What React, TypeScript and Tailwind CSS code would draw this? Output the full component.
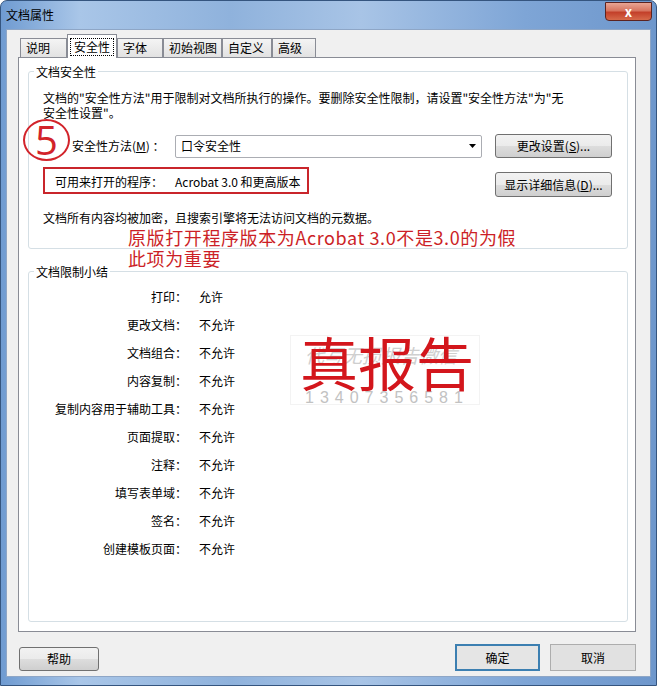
const tabs = [
  { label: "说明", w: "w-[47px]" },
  { label: "安全性", w: "w-[50px]", active: true },
  { label: "字体", w: "w-[46px]" },
  { label: "初始视图", w: "w-[59px]" },
  { label: "自定义", w: "w-[50px]" },
  { label: "高级", w: "w-[44px]" },
];

const limits = [
  { label: "打印", value: "允许" },
  { label: "更改文档", value: "不允许" },
  { label: "文档组合", value: "不允许" },
  { label: "内容复制", value: "不允许" },
  { label: "复制内容用于辅助工具", value: "不允许" },
  { label: "页面提取", value: "不允许" },
  { label: "注释", value: "不允许" },
  { label: "填写表单域", value: "不允许" },
  { label: "签名", value: "不允许" },
  { label: "创建模板页面", value: "不允许" },
];

const btn =
  "flex items-center justify-center rounded-[3px] border border-[#707070] bg-[linear-gradient(180deg,#f2f2f2_0%,#ebebeb_50%,#dddddd_51%,#cfcfcf_100%)] text-[12px] text-black";

const App = () => {
  return (
    <div className="flex h-[686px] w-[657px] flex-col rounded-t-[7px] border border-[#35557f] bg-[linear-gradient(90deg,#6f9bd1_0%,#a9c6e8_12%,#8fb2dc_35%,#a8c4e6_55%,#7ea5d6_80%,#6e97cc_100%)] font-['Noto_Sans_CJK_SC','Liberation_Sans',sans-serif] text-black">
      {/* 标题栏 */}
      <div className="flex h-[28px] items-start justify-between pl-[5px] pr-[4px]">
        <span className="mt-[6px] text-[12px] leading-[16px]">文档属性</span>
        <div className="mt-[1px] flex h-[19px] w-[47px] items-center justify-center rounded-b-[4px] border border-[#5c2320] bg-[linear-gradient(180deg,#e9a594_0%,#d77560_45%,#c3402a_55%,#d66a4a_100%)] text-[13px] font-bold leading-none text-white">
          x
        </div>
      </div>

      {/* 客户区 */}
      <div className="mx-[5px] mb-[8px] flex flex-1 flex-col border border-[#8ea6c6] bg-[#f0f0f0] pl-[11px] pt-[4px]">
        {/* 选项卡 */}
        <div className="relative z-10 ml-[2px] flex h-[23px] items-end">
          {tabs.map((t) =>
            t.active ? (
              <div
                key={t.label}
                className={`${t.w} -mb-px flex h-[24px] items-center justify-center border border-b-0 border-[#898c95] bg-white text-[12px]`}
              >
                <span className="border border-dotted border-black px-[3px] leading-[16px]">{t.label}</span>
              </div>
            ) : (
              <div
                key={t.label}
                className={`${t.w} flex h-[19px] items-center border border-b-0 border-[#898c95] bg-[linear-gradient(180deg,#f4f4f4,#e2e2e2)] pl-[5px] text-[12px] leading-[16px]`}
              >
                {t.label}
              </div>
            )
          )}
        </div>

        {/* 面板 */}
        <div className="flex h-[575px] w-[618px] flex-col border border-[#898c95] bg-white pl-[9px] pt-[13px] text-[12px]">
          {/* 文档安全性 */}
          <div className="relative h-[178px] w-[600px] rounded-[3px] border border-[#d5dfe5]">
            <span className="absolute -top-[8px] left-[5px] bg-white px-[2px] leading-[16px]">文档安全性</span>
            <div className="flex flex-col pl-[14px] pr-[15px] pt-[18px]">
              <p className="leading-[15px]">
                文档的"安全性方法"用于限制对文档所执行的操作。要删除安全性限制，请设置"安全性方法"为"无
                <br />
                安全性设置"。
              </p>

              <div className="mt-[14px] flex h-[24px] items-center">
                <span className="w-[122px] pl-[29px] text-left">安全性方法(<span className="underline">M</span>) ：</span>
                <div className="ml-[10px] flex h-[23px] w-[307px] items-center justify-between rounded-[2px] border border-[#abadb3] bg-white pl-[5px] pr-[5px]">
                  <span>口令安全性</span>
                  <svg width="7" height="4" viewBox="0 0 7 4">
                    <path d="M0 0h7L3.5 4z" fill="#000" />
                  </svg>
                </div>
                <div className={`${btn} ml-[13px] h-[24px] w-[117px]`}>
                  更改设置(<span className="underline">S</span>)...
                </div>
              </div>

              <div className="mt-[9px] flex items-start">
                <div className="flex h-[27px] w-[266px] items-center border-2 border-[#c9252b] pt-[3px]">
                  <span className="w-[120px] pl-[10px] text-left">可用来打开的程序：</span>
                  <span className="ml-[10px]">Acrobat 3.0 和更高版本</span>
                </div>
                <div className={`${btn} ml-[186px] mt-[5px] h-[25px] w-[117px]`}>
                  显示详细信息(<span className="underline">D</span>)...
                </div>
              </div>

              <p className="mt-[13px] leading-[15px]">文档所有内容均被加密，且搜索引擎将无法访问文档的元数据。</p>
            </div>

            {/* 标注 */}
            <div className="absolute -left-[6px] top-[47px] flex h-[42px] w-[47px] items-center justify-center rounded-[50%] border-[2.5px] border-[#d2232a] font-['Open_Sans',sans-serif] text-[40px] font-normal leading-none text-[#d2232a]">
              5
            </div>
            <div className="absolute left-[99px] top-[155px] whitespace-nowrap text-[18px] leading-[21px] tracking-[0.6px] text-[#cc1f27]">
              原版打开程序版本为Acrobat 3.0不是3.0的为假
              <br />
              此项为重要
            </div>
          </div>

          {/* 文档限制小结 */}
          <div className="relative mt-[22px] h-[351px] w-[600px] rounded-[3px] border border-[#d5dfe5]">
            <span className="absolute -top-[8px] left-[5px] bg-white px-[2px] leading-[16px]">文档限制小结</span>
            <div className="flex flex-col pt-[11px]">
              {limits.map((r) => (
                <div key={r.label} className="flex h-[28px] items-center">
                  <span className="w-[158px] text-right">{r.label}：</span>
                  <span className="ml-[12px]">{r.value}</span>
                </div>
              ))}
            </div>

            {/* 水印 */}
            <div className="absolute left-[261px] top-[63px] h-[70px] w-[190px] border border-[#f3f3f3]" />
            <div className="absolute left-[276px] top-[73px] whitespace-nowrap text-[19px] italic leading-[20px] text-[#cfcfcf]">
              代写无损报告微信
            </div>
            <div className="absolute left-[276px] top-[117px] whitespace-nowrap font-['Liberation_Sans',sans-serif] text-[16px] leading-[18px] tracking-[6px] text-[#c2c2c2]">
              13407356581
            </div>
            <div className="absolute left-[271px] top-[60px] whitespace-nowrap text-[58px] leading-none text-[#d3161c]">
              真报告
            </div>
          </div>
        </div>

        {/* 底部按钮 */}
        <div className="mt-[12px] flex w-[618px] items-start justify-between">
          <div className={`${btn} ml-[1px] mt-[3px] h-[24px] w-[80px]`}>帮助</div>
          <div className="flex">
            <div className="flex h-[27px] w-[85px] items-center justify-center border-2 border-[#3c7fb1] bg-[#e5e5e5] text-[12px]">
              确定
            </div>
            <div className="ml-[10px] flex h-[27px] w-[86px] items-center justify-center border border-[#adadad] bg-[#e1e1e1] text-[12px]">
              取消
            </div>
          </div>
        </div>
      </div>
    </div>
  );
};

export default App;
